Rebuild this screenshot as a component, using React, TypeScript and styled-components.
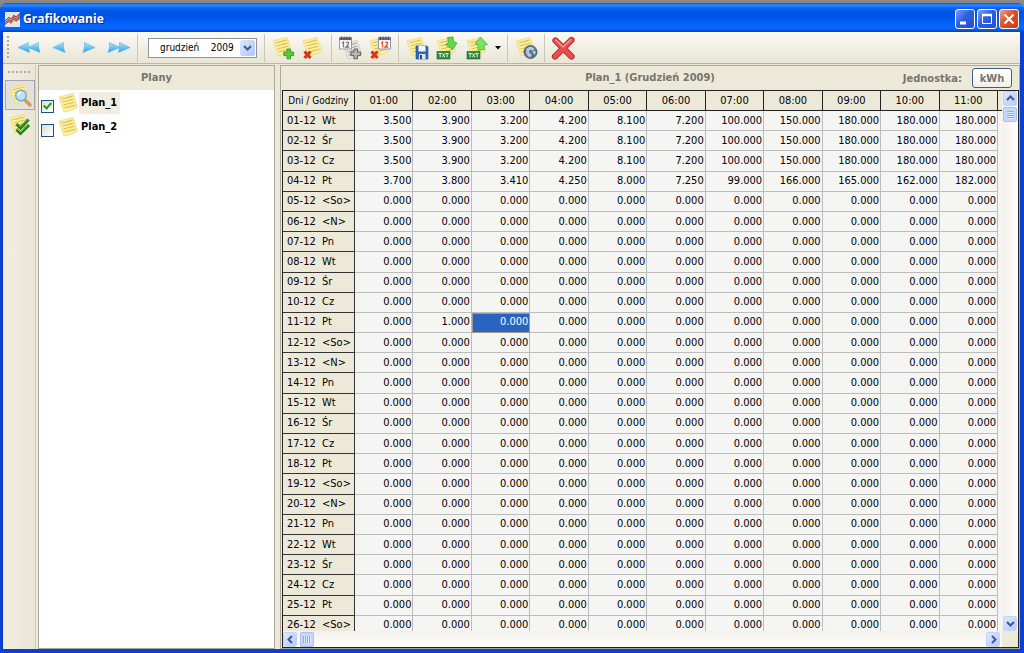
import React, { useState } from "react";
import styled, { createGlobalStyle, css } from "styled-components";

const uiFont = '"DejaVu Sans Condensed", "DejaVu Sans", sans-serif';
const face = "#ece9d8";

const GlobalStyle = createGlobalStyle`
  * { box-sizing: border-box; }
  body { margin: 0; font-family: ${uiFont}; font-size: 11px; color: #000; }
  button, select, input { font: inherit; margin: 0; }
`;

const Desktop = styled.div`
  height: 100vh;
  min-height: 320px;
  padding-top: 3px;
  background: #8b8784;
  display: flex;
  flex-direction: column;
`;

const Window = styled.main`
  flex: 1;
  min-height: 0;
  display: flex;
  flex-direction: column;
  padding: 0 4px 4px 3px;
  background: #0a3fd0;
  border-radius: 7px 7px 0 0;
`;

const TitleBar = styled.header`
  height: 29px;
  flex: none;
  display: flex;
  align-items: center;
  gap: 2px;
  margin: 0 -4px 0 -3px;
  padding: 3px 5px 0;
  border-radius: 7px 7px 0 0;
  background: linear-gradient(#0a50d8 0, #2f8dff 2px, #0a62f0 5px, #0054e3 9px, #0055e8 14px, #0566ff 22px, #0564fb 26px, #0340c0 29px);
`;

const Title = styled.h1`
  flex: 1;
  margin: 0 0 0 1px;
  color: #fff;
  font: bold 12px/16px "Open Sans", sans-serif;
  text-shadow: 1px 1px 1px #0a2a80;
`;

const CaptionButton = styled.button<{ $close?: boolean }>`
  width: 20px;
  height: 20px;
  padding: 0;
  display: grid;
  place-items: center;
  border: 1px solid #fff;
  border-radius: 3px;
  background: ${(p) =>
    p.$close
      ? "linear-gradient(135deg, #f0a088, #e0512b 45%, #c93c14)"
      : "linear-gradient(135deg, #7f9ff2, #2f5fe0 45%, #1e4fd6)"};
`;

const Toolbar = styled.div`
  height: 32px;
  flex: none;
  display: flex;
  align-items: center;
  padding: 1px 0 1px 4px;
  border-bottom: 1px solid #b9b6a6;
  background: linear-gradient(#fbfaf6, #f1efe4 50%, #e9e6d6);
`;

const Grip = styled.span<{ $flat?: boolean }>`
  flex: none;
  ${(p) =>
    p.$flat
      ? css`width: 22px; height: 2px; margin: 6px auto 7px;
          background: repeating-linear-gradient(90deg, #aaa698 0 2px, transparent 2px 4px);`
      : css`width: 2px; height: 24px; margin-right: 2px;
          background: repeating-linear-gradient(#aaa698 0 2px, transparent 2px 4px);`}
`;

const Group = styled.div`
  height: 28px;
  display: flex;
  align-items: center;
  padding: 0 3px;
  & + & { border-left: 1px solid #c9c6b8; }
`;

const PeriodGroup = styled(Group)`
  padding: 0 7px 0 10px;
`;

const ToolButton = styled.button<{ $narrow?: boolean }>`
  width: ${(p) => (p.$narrow ? 12 : 30)}px;
  height: 26px;
  padding: 0;
  border: 0;
  background: none;
  display: grid;
  place-items: center;
  svg { display: block; }
`;

const PeriodBox = styled.label`
  width: 109px;
  height: 20px;
  display: flex;
  align-items: center;
  padding: 1px;
  border: 1px solid #8f9499;
  background: #fff;
`;

const PeriodSelect = styled.select`
  flex: 1;
  min-width: 0;
  padding: 0 0 0 10px;
  border: 0;
  outline: 0;
  appearance: none;
  background: none;
  color: #000;
  font-size: 10px;
`;

const DropMark = styled.span`
  width: 15px;
  height: 16px;
  display: grid;
  place-items: center;
  border-radius: 2px;
  background: linear-gradient(135deg, #dfe8fe, #aec5f5);
`;

const Workspace = styled.div`
  flex: 1;
  min-height: 0;
  display: flex;
  padding-top: 1px;
  background: ${face};
`;

const Rail = styled.nav`
  width: 33px;
  flex: none;
  background: linear-gradient(90deg, #f0eee2, #ebe5d8);
  border-right: 1px solid #cfccbd;
  display: flex;
  flex-direction: column;
`;

const RailButton = styled.button<{ $active?: boolean }>`
  width: 30px;
  height: 30px;
  margin-left: 2px;
  padding: 0;
  display: grid;
  place-items: center;
  border: 1px solid ${(p) => (p.$active ? "#a3a6ad" : "transparent")};
  background: ${(p) => (p.$active ? "#e3e1da" : "none")};
`;

const PlansPanel = styled.section`
  width: 237px;
  flex: none;
  margin-left: 2px;
  display: flex;
  flex-direction: column;
  border: 1px solid #aaa898;
`;

const PanelTitle = styled.h2`
  margin: 0;
  color: #77756c;
  font-size: 11px;
  font-weight: bold;
  line-height: 24px;
  text-align: center;
`;

const PlanList = styled.ul`
  flex: 1;
  margin: 0;
  padding: 1px 2px;
  list-style: none;
  background: #fff;
`;

const PlanRow = styled.li`
  height: 24px;
  display: flex;
  align-items: center;
  font-weight: bold;
`;

const Check = styled.input`
  appearance: none;
  width: 13px;
  height: 13px;
  margin: 6px 3px 0 0;
  border: 1px solid #1c5180;
  background: linear-gradient(135deg, #dcdcd7, #fff);
  display: grid;
  place-items: center;
  &:checked::after {
    content: "";
    width: 3px;
    height: 6px;
    margin-top: -2px;
    border: solid #21a121;
    border-width: 0 2px 2px 0;
    transform: rotate(42deg);
  }
`;

const PlanLabel = styled.label`
  display: flex;
  align-items: center;
`;

const PlanName = styled.span<{ $selected?: boolean }>`
  line-height: 22px;
  padding: 0 3px 0 2px;
  background: ${(p) => (p.$selected ? "#f0eee1" : "none")};
`;

const DataPanel = styled.section`
  flex: 1;
  min-width: 0;
  margin-left: 5px;
  display: flex;
  flex-direction: column;
  border: 1px solid #aaa898;
`;

const DataHeader = styled.div`
  height: 24px;
  flex: none;
  display: grid;
  grid-template-columns: 1fr auto 1fr;
  align-items: center;
`;

const Unit = styled.div`
  display: flex;
  align-items: center;
  justify-content: flex-end;
  gap: 10px;
  padding-right: 7px;
  color: #77756c;
  font-weight: bold;
`;

const UnitButton = styled.button`
  width: 40px;
  height: 20px;
  padding: 0;
  border: 1px solid #3f5f7d;
  border-radius: 3px;
  background: linear-gradient(#fff, #f0f0ea);
  color: #77756c;
`;

const GridFrame = styled.div`
  flex: 1;
  min-height: 0;
  display: grid;
  grid-template: minmax(0, 1fr) 16px / minmax(0, 1fr) 16px;
  margin-left: 1px;
  border: 1px solid #222;
  background: #fdfdfd;
`;

const GridView = styled.div`
  overflow: hidden;
  padding-right: 4px;
  background: linear-gradient(${face} 19px, #222 19px 20px, #f5f5f4 20px);
`;

const Table = styled.table`
  width: 100%;
  height: calc(100% + 5px);
  table-layout: fixed;
  border-collapse: separate;
  border-spacing: 0;
  background: #f5f5f4;
  font-size: 11px;
  line-height: 14px;
`;

const HeadCell = styled.th<{ $first?: boolean }>`
  width: ${(p) => (p.$first ? "72px" : "auto")};
  height: 20px;
  padding: 0;
  font-size: ${(p) => (p.$first ? 10 : 11)}px;
  font-weight: normal;
  white-space: nowrap;
  background: ${face};
  border: solid #222;
  border-width: 0 1px 1px 0;
`;

const DayCell = styled.th`
  height: 20px;
  padding: 0 0 0 4px;
  font-weight: normal;
  text-align: left;
  white-space: pre;
  background: ${face};
  border: solid #333;
  border-width: 0 1px 1px 0;
`;

const ValueCell = styled.td<{ $selected?: boolean }>`
  padding: 0 1px 0 0;
  text-align: right;
  border: solid #bcbcbc;
  border-width: 0 1px 1px 0;
  ${(p) =>
    p.$selected &&
    css`background: #2a63c0; color: #fff; outline: 1px solid #a39a82; outline-offset: -1px;`}
`;

const VerticalBar = styled.div`
  display: flex;
  flex-direction: column;
  align-items: center;
  justify-content: space-between;
  background: linear-gradient(90deg, #f3f1ec, #fefefb);
`;

const HorizontalBar = styled.div`
  display: flex;
  align-items: center;
  justify-content: space-between;
  padding-right: 2px;
  background: linear-gradient(#f3f1ec, #fefefb);
`;

const Corner = styled.div`
  background: ${face};
`;

const ScrollEnd = styled.div<{ $row?: boolean }>`
  display: flex;
  flex-direction: ${(p) => (p.$row ? "row" : "column")};
  gap: ${(p) => (p.$row ? 3 : 1)}px;
`;

const ScrollButton = styled.button`
  width: 14px;
  height: 15px;
  padding: 0;
  display: grid;
  place-items: center;
  border: 1px solid #c3d3fb;
  border-radius: 2px;
  background: linear-gradient(135deg, #dce6ff, #b8ccfa);
`;

const Thumb = styled.span<{ $row?: boolean }>`
  width: 14px;
  height: 15px;
  border: 1px solid #a9c0f5;
  border-radius: 2px;
  background:
    repeating-linear-gradient(${(p) => (p.$row ? "90deg" : "180deg")}, #8ea9ec 0 1px, #dbe6ff 1px 2px)
    center / ${(p) => (p.$row ? "8px 7px" : "7px 8px")} no-repeat, #c6d6fc;
`;

const Svg = ({ w = 24, h = 24, children }: { w?: number; h?: number; children: React.ReactNode }) => (
  <svg width={w} height={h} viewBox={`0 0 ${w} ${h}`} fill="none" aria-hidden="true">
    {children}
  </svg>
);

const Note = ({ grey }: { grey?: boolean }) => (
  <g>
    <path
      d="M2 5 L16 1.5 Q18 7 20.5 15 Q15 19 7 20 Q5 13 2 5Z"
      fill={grey ? "#e9e9e7" : "#fbf0a4"}
      stroke={grey ? "#c6c6c2" : "#ecd97a"}
      strokeWidth="0.8"
    />
    <path
      d="M4.5 7 L15.5 4.2 M5.5 10 L16.5 7.2 M6.5 13 L17.5 10.2 M7.5 16 L18.5 13.2"
      stroke={grey ? "#aaa" : "#dfc04a"}
      strokeWidth="1.2"
    />
  </g>
);

const Cross = () => (
  <path d="M3.5 15.5 L9.5 22 M9.5 15.5 L3.5 22" stroke="#d93416" strokeWidth="3.2" />
);

const Plus = ({ color, edge }: { color: string; edge: string }) => (
  <path
    d="M16 13 h3.5 v3 h3.2 v3.6 h-3.2 v3.2 h-3.5 v-3.2 h-3.2 v-3.6 h3.2z"
    fill={color}
    stroke={edge}
    strokeWidth="0.9"
  />
);

const Calendar = ({ x, grey }: { x: number; grey?: boolean }) => (
  <g transform={`translate(${x} 0)`}>
    <rect x="0.5" y="1.5" width="12" height="11.5" fill="#fff" stroke={grey ? "#999" : "#8d8fbf"} />
    <path d="M0.5 3 h12" stroke={grey ? "#666" : "#6c6ca0"} strokeWidth="2.2" />
    <path d="M2.5 0.5 v3 M5.2 0.5 v3 M7.9 0.5 v3 M10.6 0.5 v3" stroke="#444" strokeWidth="0.9" />
    <path
      d="M3 7.2 L4.5 6 V11.5 M7 6.8 Q8.5 5.4 9.7 6.7 Q10 8.3 7 11 H10.3"
      stroke={grey ? "#777" : "#e0541c"}
      strokeWidth="1.3"
    />
  </g>
);

const Sheet = () => (
  <g>
    <rect x="2" y="15.5" width="13" height="7.5" fill="#2c8a35" stroke="#1b6a26" strokeWidth="0.6" />
    <path
      d="M3.5 17.5 H6.8 M5.2 17.5 V21.2 M7.4 17.4 L9.8 21.2 M9.8 17.4 L7.4 21.2 M10.5 17.5 H13.7 M12.1 17.5 V21.2"
      stroke="#fff"
      strokeWidth="0.9"
    />
  </g>
);

const Chevron = ({ dir }: { dir: "left" | "right" | "up" | "down" }) => {
  const paths = {
    left: "M6 1 L2.5 4.5 L6 8",
    right: "M3 1 L6.5 4.5 L3 8",
    up: "M1 6 L4.5 2.5 L8 6",
    down: "M1 3 L4.5 6.5 L8 3",
  };
  return (
    <Svg w={9} h={9}>
      <path d={paths[dir]} stroke="#3f5a93" strokeWidth="2" />
    </Svg>
  );
};

const NavArrow = ({ flip, twice }: { flip?: boolean; twice?: boolean }) => (
  <Svg>
    <defs>
      <linearGradient id="sky" x1="0" y1="0" x2="0" y2="1">
        <stop offset="0" stopColor="#b5e8fb" />
        <stop offset="0.5" stopColor="#66c4f2" />
        <stop offset="1" stopColor="#3a9fe0" />
      </linearGradient>
    </defs>
    <g transform={flip ? "translate(24 0) scale(-1 1)" : undefined} fill="url(#sky)" stroke="#5ab2e2" strokeWidth="0.6">
      {twice ? (
        <>
          <path d="M1 11.5 L11.5 6.5 L11.5 11.5 L12.5 16.5Z" />
          <path d="M11 11.5 L21.5 6.5 L21.5 11.5 L23 16.5Z" />
        </>
      ) : (
        <path d="M6 11.5 L16.5 6.5 L16.5 11.5 L18 16.5Z" />
      )}
    </g>
  </Svg>
);

const zero = Array<string>(11).fill("0.000");
const tail = ["150.000", "180.000", "180.000", "180.000"];
const weekday = ["3.500", "3.900", "3.200", "4.200", "8.100", "7.200", "100.000", ...tail];
const filled: Record<number, string[]> = {
  1: weekday,
  2: weekday,
  3: weekday,
  4: ["3.700", "3.800", "3.410", "4.250", "8.000", "7.250", "99.000", "166.000", "165.000", "162.000", "182.000"],
  11: ["0.000", "1.000", ...zero.slice(2)],
};
const dayNames = ["Wt", "Śr", "Cz", "Pt", "<So>", "<N>", "Pn"];
const two = (n: number) => String(n).padStart(2, "0");
const days = Array.from({ length: 26 }, (_, i) => ({
  label: `${two(i + 1)}-12  ${dayNames[i % 7]}`,
  values: filled[i + 1] ?? zero,
}));
const hours = Array.from({ length: 11 }, (_, i) => `${two(i + 1)}:00`);

export default function App() {
  const [checked, setChecked] = useState<Record<string, boolean>>({ Plan_1: true, Plan_2: false });
  const [cell, setCell] = useState("10-2");

  return (
    <Desktop>
      <GlobalStyle />
      <Window>
        <TitleBar>
          <Svg w={15} h={15}>
            <rect width="15" height="15" fill="#e8e4e4" />
            <path d="M0 10 L4 6 L6 8 L9 3 L11 6 L15 1 V7 L11 10 L9 8 L6 12 L4 10 L0 13Z" fill="#b5675c" />
            <path d="M0 9 L4 5 L6 7 L9 3 L11 5 L15 1" stroke="#8d4a48" />
          </Svg>
          <Title>Grafikowanie</Title>
          <CaptionButton aria-label="Minimalizuj">
            <Svg w={18} h={18}><path d="M4 13 h6" stroke="#fff" strokeWidth="3" /></Svg>
          </CaptionButton>
          <CaptionButton aria-label="Maksymalizuj">
            <Svg w={18} h={18}>
              <path d="M4.5 5 v8.5 h9 V5" stroke="#fff" />
              <path d="M4 5 h10" stroke="#fff" strokeWidth="2.5" />
            </Svg>
          </CaptionButton>
          <CaptionButton $close aria-label="Zamknij">
            <Svg w={18} h={18}><path d="M4.5 4.5 L13.5 13.5 M13.5 4.5 L4.5 13.5" stroke="#fff" strokeWidth="2.2" /></Svg>
          </CaptionButton>
        </TitleBar>

        <Toolbar>
          <Grip />
          <Group>
            <ToolButton aria-label="Pierwszy"><NavArrow twice /></ToolButton>
            <ToolButton aria-label="Poprzedni"><NavArrow /></ToolButton>
            <ToolButton aria-label="Następny"><NavArrow flip /></ToolButton>
            <ToolButton aria-label="Ostatni"><NavArrow flip twice /></ToolButton>
          </Group>
          <PeriodGroup>
            <PeriodBox>
              <PeriodSelect aria-label="Miesiąc" defaultValue="12">
                <option value="12">{"grudzień\u00a0\u00a0\u00a0\u00a02009"}</option>
              </PeriodSelect>
              <DropMark><Chevron dir="down" /></DropMark>
            </PeriodBox>
          </PeriodGroup>
          <Group>
            <ToolButton aria-label="Dodaj plan"><Svg><Note /><Plus color="#58c83e" edge="#2f9a2a" /></Svg></ToolButton>
            <ToolButton aria-label="Usuń plan"><Svg><Note /><Cross /></Svg></ToolButton>
          </Group>
          <Group>
            <ToolButton aria-label="Dodaj miesiąc">
              <Svg><g transform="translate(3 3)"><Note grey /></g><Calendar x={1} grey /><Plus color="#b5b5b3" edge="#555" /></Svg>
            </ToolButton>
            <ToolButton aria-label="Usuń miesiąc"><Svg><Note /><Calendar x={10} /><Cross /></Svg></ToolButton>
          </Group>
          <Group>
            <ToolButton aria-label="Zapisz">
              <Svg>
                <Note />
                <path d="M11 10 h11 l1 1 v12 H11Z" fill="#2f67b8" stroke="#204a8c" strokeWidth="0.6" />
                <path d="M13.5 10 h7 v5.5 h-7z" fill="#f4f7fb" />
                <path d="M14 18 h6.5 v5 H14z" fill="#dfe6f0" />
                <path d="M15 19 h2 v4 h-2z" fill="#204a8c" />
              </Svg>
            </ToolButton>
            <ToolButton aria-label="Importuj">
              <Svg><Note /><path d="M12.5 1.5 L18 1 L18.5 5.5 L22 7 L17.5 13.5 L10.5 8.5 L13.5 6.5Z" fill="#62d548" stroke="#2fa02c" strokeWidth="0.7" /><Sheet /></Svg>
            </ToolButton>
            <ToolButton aria-label="Eksportuj">
              <Svg><Note /><path d="M15.5 1 L22.5 8.5 L19 9 L19.5 13.5 L13 14 L13 8.5 L10 8Z" fill="#7be35c" stroke="#3aae34" strokeWidth="0.7" /><Sheet /></Svg>
            </ToolButton>
            <ToolButton $narrow aria-label="Więcej">
              <Svg w={6} h={4}><path d="M0 0 H6 L3 3.5Z" fill="#000" /></Svg>
            </ToolButton>
          </Group>
          <Group>
            <ToolButton aria-label="Odśwież">
              <Svg>
                <Note />
                <circle cx="16.5" cy="16" r="6.5" fill="#5d7394" stroke="#3b4c66" strokeWidth="0.8" />
                <path d="M12.5 13 Q16 9 20.5 12.5 L19 15.5 Q17 12.5 15 15 Q15 18 18 18.5 L16 21.5 Q11 19 12.5 13Z" fill="#b9c9df" />
                <path d="M18.5 16 l3 -1 -0.5 3.5z" fill="#e6edf6" />
              </Svg>
            </ToolButton>
          </Group>
          <Group>
            <ToolButton aria-label="Zamknij widok">
              <Svg>
                <path d="M4.5 4.5 L20.5 20.5 M20.5 4 L4 20.5" stroke="#a92427" strokeWidth="6.2" strokeLinecap="round" />
                <path d="M4.5 4.5 L20.5 20.5 M20.5 4 L4 20.5" stroke="#e84c4e" strokeWidth="4.6" strokeLinecap="round" />
                <path d="M4.5 3.8 L12 11 L20 3.5" stroke="#f59a98" strokeWidth="1.4" />
              </Svg>
            </ToolButton>
          </Group>
        </Toolbar>

        <Workspace>
          <Rail aria-label="Widoki">
            <Grip $flat />
            <RailButton $active aria-label="Podgląd">
              <Svg>
                <Note />
                <path d="M17 17 L22 22" stroke="#d69a5c" strokeWidth="3.4" strokeLinecap="round" />
                <circle cx="13" cy="12.5" r="5.3" fill="#b9e3fa" stroke="#7aa6cc" strokeWidth="1.4" />
                <path d="M10 12 Q10.5 9.5 13 9.5" stroke="#fff" strokeWidth="1.3" />
              </Svg>
            </RailButton>
            <RailButton aria-label="Zatwierdź">
              <Svg>
                <Note />
                <path d="M8.5 11 L12.5 15 L20.5 6.5" stroke="#1f7a1f" strokeWidth="3" />
                <path d="M8.5 16.5 L12.5 20.5 L21 12" stroke="#1f7a1f" strokeWidth="3" />
                <path d="M9 10.7 L12.5 14 L20 6.3 M9 16.2 L12.5 19.5 L20.5 11.8" stroke="#5bc04a" strokeWidth="0.9" />
              </Svg>
            </RailButton>
          </Rail>

          <PlansPanel>
            <PanelTitle>Plany</PanelTitle>
            <PlanList>
              {Object.keys(checked).map((name, i) => (
                <PlanRow key={name}>
                  <Check
                    type="checkbox"
                    id={name}
                    checked={checked[name]}
                    onChange={(e) => setChecked({ ...checked, [name]: e.target.checked })}
                  />
                  <PlanLabel htmlFor={name}>
                    <Svg w={22} h={22}><Note /></Svg>
                    <PlanName $selected={i === 0}>{name}</PlanName>
                  </PlanLabel>
                </PlanRow>
              ))}
            </PlanList>
          </PlansPanel>

          <DataPanel>
            <DataHeader>
              <span />
              <PanelTitle>Plan_1 (Grudzień 2009)</PanelTitle>
              <Unit>
                <span id="unit">Jednostka:</span>
                <UnitButton aria-describedby="unit">kWh</UnitButton>
              </Unit>
            </DataHeader>
            <GridFrame>
              <GridView>
                <Table>
                  <thead>
                    <tr>
                      <HeadCell $first scope="col">Dni / Godziny</HeadCell>
                      {hours.map((h) => <HeadCell key={h} scope="col">{h}</HeadCell>)}
                    </tr>
                  </thead>
                  <tbody>
                    {days.map((day, r) => (
                      <tr key={day.label}>
                        <DayCell scope="row">{day.label}</DayCell>
                        {day.values.map((v, c) => (
                          <ValueCell key={c} $selected={cell === `${r}-${c}`} onClick={() => setCell(`${r}-${c}`)}>
                            {v}
                          </ValueCell>
                        ))}
                      </tr>
                    ))}
                  </tbody>
                </Table>
              </GridView>
              <VerticalBar>
                <ScrollEnd>
                  <ScrollButton aria-label="W górę"><Chevron dir="up" /></ScrollButton>
                  <Thumb />
                </ScrollEnd>
                <ScrollButton aria-label="W dół"><Chevron dir="down" /></ScrollButton>
              </VerticalBar>
              <HorizontalBar>
                <ScrollEnd $row>
                  <ScrollButton aria-label="W lewo"><Chevron dir="left" /></ScrollButton>
                  <Thumb $row />
                </ScrollEnd>
                <ScrollButton aria-label="W prawo"><Chevron dir="right" /></ScrollButton>
              </HorizontalBar>
              <Corner />
            </GridFrame>
          </DataPanel>
        </Workspace>
      </Window>
    </Desktop>
  );
}
